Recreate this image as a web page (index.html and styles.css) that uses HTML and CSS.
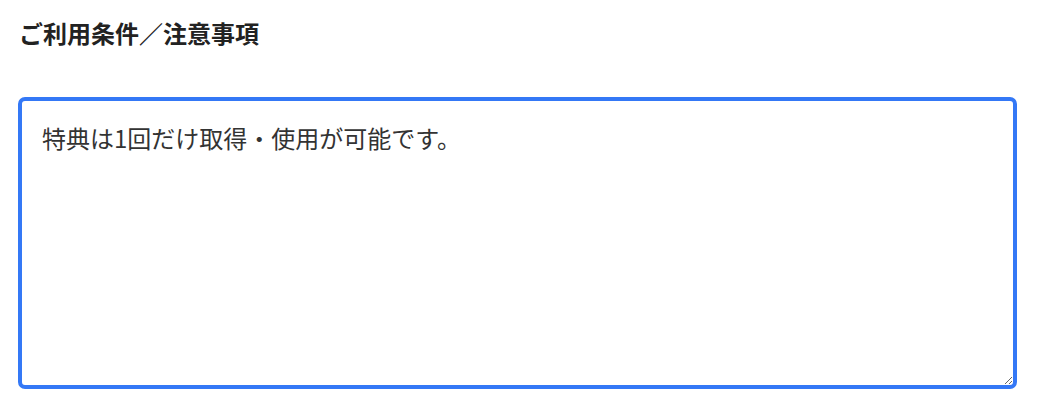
FILE: index.html
```html
<!DOCTYPE html>
<html lang="ja">
<head>
<meta charset="utf-8">
<link rel="stylesheet" href="styles.css">
</head>
<body>
<div class="page">
  <h2 class="label">ご利用条件／注意事項</h2>
  <textarea class="field">特典は1回だけ取得・使用が可能です。</textarea>
</div>
</body>
</html>
```

FILE: styles.css
```css
html, body {
  margin: 0;
  padding: 0;
  background: #ffffff;
}
.page {
  padding: 15px 0 0 18px;
  display: flex;
  flex-direction: column;
  font-family: "Noto Sans CJK JP", "Noto Sans", sans-serif;
}
.label {
  margin: 0 0 0 1px;
  font-size: 24px;
  line-height: 36px;
  font-weight: 700;
  color: #222222;
}
.field {
  margin-top: 46px;
  box-sizing: border-box;
  width: 999px;
  height: 292px;
  border: 4px solid #3478f6;
  border-radius: 7px;
  padding: 20px 20px;
  font-family: "Noto Sans CJK JP", "Noto Sans", sans-serif;
  font-size: 24px;
  line-height: 33px;
  color: #333333;
  outline: none;
  resize: both;
  background: #ffffff;
}
```
